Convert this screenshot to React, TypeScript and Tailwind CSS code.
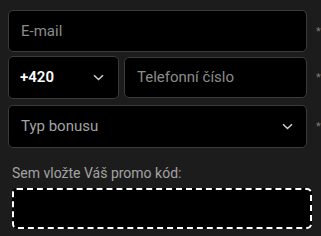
import React from "react";

function Chevron() {
  return (
    <svg width="11" height="7" viewBox="0 0 11 7" fill="none" className="shrink-0">
      <path d="M1 1.2L5.5 5.5L10 1.2" stroke="#d0d0d0" strokeWidth="1.5" />
    </svg>
  );
}

function Star() {
  return <span className="ml-[9px] text-[11px] leading-none text-[#7a7a7a]">*</span>;
}

export default function App() {
  return (
    <div
      className="w-[321px] h-[236px] overflow-hidden bg-[#1c1c1c] pt-[10px] pl-[8px]"
      style={{ fontFamily: "Roboto, 'Liberation Sans', sans-serif" }}
    >
      <div className="flex items-center w-[340px]">
        <div className="w-[299px] h-[42px] shrink-0 bg-black border border-[#3b3b3b] rounded-[5px] flex items-center pl-[12px] text-[15px] text-[#8c8c8c]">
          E-mail
        </div>
        <Star />
      </div>

      <div className="flex items-center w-[340px] mt-[4px]">
        <div className="w-[111px] h-[43px] shrink-0 bg-black border border-[#3b3b3b] rounded-[5px] flex items-center justify-between pl-[11px] pr-[14px] text-[15px] font-semibold text-white">
          +420
          <Chevron />
        </div>
        <div className="ml-[5px] w-[183px] h-[41px] shrink-0 bg-black border border-[#3b3b3b] rounded-[5px] flex items-center pl-[12px] text-[15px] text-[#8c8c8c]">
          Telefonní číslo
        </div>
        <Star />
      </div>

      <div className="flex items-center w-[340px] mt-[6px]">
        <div className="w-[299px] h-[43px] shrink-0 bg-black border border-[#3b3b3b] rounded-[5px] flex items-center justify-between pl-[12px] pr-[13px] text-[15px] text-[#a3a3a3]">
          Typ bonusu
          <Chevron />
        </div>
        <Star />
      </div>

      <div className="ml-[4px] mt-[15px] text-[14px] leading-[20px] text-[#a3a3a3]">
        Sem vložte Váš promo kód:
      </div>

      <div className="ml-[4px] mt-[5px] w-[300px] h-[41px] bg-black border-2 border-dashed border-white rounded-[5px]" />
    </div>
  );
}
